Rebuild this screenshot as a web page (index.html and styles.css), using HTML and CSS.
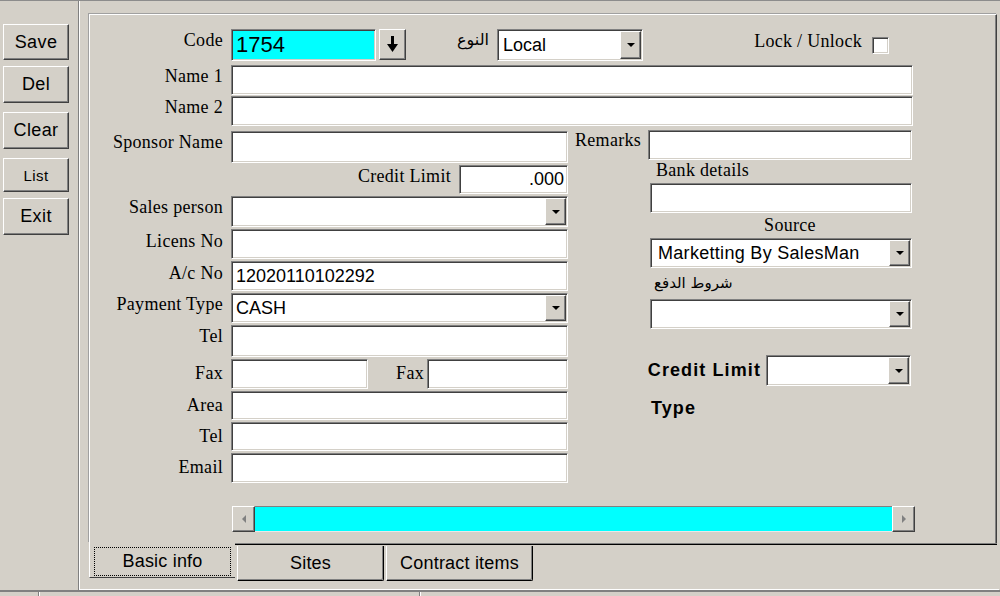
FILE: index.html
```html
<!DOCTYPE html>
<html>
<head>
<meta charset="utf-8">
<title>Customer</title>
<link rel="stylesheet" href="styles.css">
</head>
<body>
<div class="app">
  <div class="body">
    <aside class="sidebar">
      <div class="raised side-btn save">Save</div>
      <div class="raised side-btn del">Del</div>
      <div class="raised side-btn clear">Clear</div>
      <div class="raised side-btn list">List</div>
      <div class="raised side-btn exit">Exit</div>
    </aside>
    <main class="main">
      <div class="panel">
        <div class="form">
          <div class="top-row">
            <span class="lbl lbl-col">Code</span>
            <div class="field code">1754</div>
            <div class="raised arrow-btn">
              <svg width="11" height="17" viewBox="0 0 11 17"><rect x="4" y="0" width="3" height="10" fill="#000"/><polygon points="0,8 11,8 5.5,16" fill="#000"/></svg>
            </div>
            <span class="ar-lbl type-lbl">النوع</span>
            <div class="field combo local"><span class="val">Local</span><span class="raised dd"></span></div>
            <span class="lbl lock">Lock / Unlock</span>
            <span class="check"></span>
          </div>
          <div class="name-row">
            <span class="lbl lbl-col">Name 1</span>
            <div class="field name-field"></div>
          </div>
          <div class="name-row second">
            <span class="lbl lbl-col">Name 2</span>
            <div class="field name-field"></div>
          </div>
          <div class="cols">
            <div class="left">
              <span class="lbl cell-lbl">Sponsor Name</span>
              <div class="field"></div>

              <span></span>
              <div class="credit-cell"><span class="lbl credit-lbl">Credit Limit</span><div class="field credit-field">.000</div></div>

              <span class="lbl cell-lbl">Sales person</span>
              <div class="field combo"><span class="val"></span><span class="raised dd"></span></div>

              <span class="lbl cell-lbl low1">Licens No</span>
              <div class="field"></div>

              <span class="lbl cell-lbl low1">A/c No</span>
              <div class="field">12020110102292</div>

              <span class="lbl cell-lbl">Payment Type</span>
              <div class="field combo"><span class="val">CASH</span><span class="raised dd"></span></div>

              <span class="lbl cell-lbl">Tel</span>
              <div class="field"></div>

              <span class="lbl cell-lbl low2">Fax</span>
              <div class="fax-cell"><div class="field fax1"></div><span class="lbl fax-lbl">Fax</span><div class="field fax2"></div></div>

              <span class="lbl cell-lbl low2">Area</span>
              <div class="field"></div>

              <span class="lbl cell-lbl low2">Tel</span>
              <div class="field"></div>

              <span class="lbl cell-lbl low2">Email</span>
              <div class="field"></div>
            </div>
            <div class="right">
              <div class="rem-row"><span class="lbl rem-lbl">Remarks</span><div class="field rem-field"></div></div>
              <div class="lbl bank-lbl">Bank details</div>
              <div class="field sub-field"></div>
              <div class="lbl src-lbl">Source</div>
              <div class="field combo sub-field"><span class="val src-val">Marketting By SalesMan</span><span class="raised dd"></span></div>
              <div class="ar-lbl pay-lbl">شروط الدفع</div>
              <div class="field combo sub-field"><span class="val"></span><span class="raised dd"></span></div>
              <div class="cl-row"><span class="bold-lbl">Credit Limit</span><div class="field combo cl-sel"><span class="val"></span><span class="raised dd"></span></div></div>
              <div class="bold-lbl type-bold">Type</div>
            </div>
          </div>
        </div>
        <div class="hscroll">
          <div class="raised sb-btn"><span class="tri-left"></span></div>
          <div class="sb-track"></div>
          <div class="raised sb-btn"><span class="tri-right"></span></div>
        </div>
      </div>
      <div class="tabs">
        <div class="tab-active"><div class="focus">Basic info</div></div>
        <div class="tab-rest">
          <div class="tab">Sites</div>
          <div class="tab contract">Contract items</div>
        </div>
      </div>
    </main>
  </div>
  <div class="status">
    <span class="st-cell st-a"></span>
    <span class="st-cell st-b"></span>
  </div>
</div>
</body>
</html>
```

FILE: styles.css
```css
html, body {
  margin: 0;
  padding: 0;
  background: #d4d0c8;
}

.app {
  width: 1000px;
  height: 596px;
  box-sizing: border-box;
  border-top: 1px solid #8c8c8c;
  display: flex;
  flex-direction: column;
  overflow: hidden;
  background: #d4d0c8;
  font-family: "Liberation Sans", Arial, sans-serif;
  color: #000;
}

.body {
  height: 589px;
  display: flex;
}

/* generic 3D styles */
.raised {
  box-sizing: border-box;
  background: #d4d0c8;
  border: 1px solid;
  border-color: #ffffff #404040 #404040 #ffffff;
  box-shadow: inset -1px -1px #808080;
}

.field {
  box-sizing: border-box;
  background: #fff;
  border: 1px solid;
  border-color: #808080 #ffffff #ffffff #808080;
  box-shadow: inset 1px 1px #404040, inset -1px -1px #d4d0c8;
  display: flex;
  align-items: center;
  padding-left: 4px;
  font-size: 18px;
  font-family: "Liberation Sans", Arial, sans-serif;
  white-space: nowrap;
  overflow: hidden;
}

.lbl {
  font-family: "Liberation Serif", "Times New Roman", serif;
  font-size: 18px;
  line-height: 20px;
  letter-spacing: 0.3px;
  white-space: nowrap;
}

.ar-lbl {
  font-family: "DejaVu Sans", sans-serif;
  font-size: 14px;
  line-height: 18px;
  white-space: nowrap;
}

.bold-lbl {
  font-family: "Liberation Sans", Arial, sans-serif;
  font-weight: bold;
  font-size: 18px;
  letter-spacing: 1.1px;
  white-space: nowrap;
}

/* sidebar */
.sidebar {
  width: 79px;
  box-sizing: border-box;
  border-right: 1px solid #808080;
  display: flex;
  flex-direction: column;
  align-items: flex-start;
  padding-left: 3px;
}

.side-btn {
  width: 66px;
  display: flex;
  align-items: center;
  justify-content: center;
  font-size: 18px;
  letter-spacing: 0.4px;
}

.save { height: 36px; margin-top: 23px; }
.del { height: 37px; margin-top: 6px; }
.clear { height: 37px; margin-top: 9px; }
.list { height: 34px; margin-top: 9px; font-size: 15px; }
.exit { height: 37px; margin-top: 6px; }

/* main area */
.main {
  width: 920px;
  box-sizing: border-box;
  border-left: 1px solid #ffffff;
  padding: 13px 2px 0 9px;
  border-bottom: 1px solid #ffffff;
  display: flex;
  flex-direction: column;
}

.panel {
  height: 529px;
  box-sizing: border-box;
  border-top: 1px solid #ffffff;
  border-left: 1px solid #ffffff;
  border-right: 1px solid #404040;
  box-shadow: inset -1px 0 #808080, -1px -1px 0 #a0a0a0;
  display: flex;
  flex-direction: column;
}

.form {
  width: 823px;
  padding-top: 14px;
}

.lbl-col {
  width: 133px;
  flex: none;
  margin-right: 8px;
  text-align: right;
  padding-top: 1px;
}

.top-row {
  display: flex;
  align-items: flex-start;
  height: 32px;
}

.code {
  width: 145px;
  height: 32px;
  background: #00ffff;
  font-size: 22px;
  padding-left: 4px;
}

.arrow-btn {
  width: 27px;
  height: 31px;
  margin-left: 3px;
  display: flex;
  align-items: center;
  justify-content: center;
}

.type-lbl {
  width: 91px;
  box-sizing: border-box;
  text-align: right;
  padding-right: 8px;
  padding-top: 2px;
  font-size: 16px;
}

.local {
  width: 146px;
  height: 32px;
  padding-left: 5px;
}

.combo .val {
  flex: 1;
}

.dd {
  align-self: stretch;
  width: 21px;
  margin: 1px 1px 1px auto;
  display: flex;
  align-items: center;
  justify-content: center;
}

.dd::after {
  content: "";
  border-left: 4px solid transparent;
  border-right: 4px solid transparent;
  border-top: 4px solid #000;
}

.lock {
  margin-left: auto;
  padding-top: 2px;
}

.check {
  width: 17px;
  height: 17px;
  box-sizing: border-box;
  background: #fff;
  border: 1px solid;
  border-color: #808080 #ffffff #ffffff #808080;
  box-shadow: inset 1px 1px #404040, inset -1px -1px #d4d0c8;
  margin: 8px 24px 0 10px;
}

.name-row {
  display: flex;
  height: 30px;
  margin-top: 4px;
}

.name-row.second {
  margin-top: 1px;
}

.name-field {
  width: 682px;
}

.cols {
  display: flex;
  gap: 7px;
  margin-top: 4px;
}

.left {
  width: 478px;
  padding-top: 1px;
  display: grid;
  grid-template-columns: 133px 337px;
  column-gap: 8px;
  row-gap: 2px;
  grid-template-rows: 32px 29px 31px 30px 30px 30px 32px 30px 29px 29px 30px;
}

.cell-lbl {
  text-align: right;
  padding-top: 1px;
}

.cell-lbl.low1 { padding-top: 2px; }
.cell-lbl.low2 { padding-top: 4px; }

.credit-cell {
  display: flex;
  justify-content: flex-end;
  align-items: flex-start;
}

.credit-lbl {
  padding-top: 1px;
  margin-right: 8px;
}

.credit-field {
  width: 109px;
  height: 29px;
  justify-content: flex-end;
  padding-right: 3px;
}

.fax-cell {
  display: flex;
}

.fax1 { width: 137px; }
.fax2 { width: 141px; }

.fax-lbl {
  flex: 1;
  text-align: right;
  padding: 4px 3px 0 0;
}

/* right column */
.right {
  width: 337px;
  display: flex;
  flex-direction: column;
}

.rem-row {
  display: flex;
  height: 30px;
}

.rem-lbl {
  flex: 1;
}

.rem-field {
  width: 264px;
}

.bank-lbl {
  height: 23px;
  padding-left: 81px;
}

.sub-field {
  margin-left: 75px;
  height: 30px;
}

.src-lbl {
  height: 25px;
  margin-left: 75px;
  padding-left: 18px;
  padding-top: 2px;
  box-sizing: border-box;
  text-align: center;
}

.src-val {
  padding-left: 3px;
  letter-spacing: 0.3px;
}

.pay-lbl {
  height: 31px;
  margin-left: 75px;
  padding-left: 4px;
  padding-top: 6px;
  box-sizing: border-box;
  font-size: 15px;
}

.cl-row {
  display: flex;
  align-items: center;
  justify-content: flex-end;
  height: 31px;
  margin-top: 26px;
  padding-right: 1px;
}

.cl-sel {
  width: 145px;
  height: 31px;
  margin-left: 5px;
}

.type-bold {
  margin-top: 12px;
  padding-left: 76px;
}

/* scrollbar */
.hscroll {
  display: flex;
  width: 683px;
  height: 26px;
  margin: auto 0 11px 142px;
}

.sb-btn {
  width: 23px;
  display: flex;
  align-items: center;
  justify-content: center;
}

.sb-track {
  flex: 1;
  background: #00ffff;
  border-top: 1px solid #808080;
  border-bottom: 1px solid #e8e8e8;
}

.tri-left {
  border-top: 4px solid transparent;
  border-bottom: 4px solid transparent;
  border-right: 4px solid #808080;
}

.tri-right {
  border-top: 4px solid transparent;
  border-bottom: 4px solid transparent;
  border-left: 4px solid #808080;
}

/* tabs */
.tabs {
  display: flex;
  height: 46px;
}

.tab-active {
  width: 146px;
  height: 35px;
  box-sizing: border-box;
  border-left: 1px solid #ffffff;
  border-bottom: 1px solid #404040;
  display: flex;
}

.focus {
  flex: 1;
  margin: 4px 4px 1px 4px;
  border: 1px dotted #000;
  display: flex;
  align-items: center;
  justify-content: center;
  font-size: 18px;
  letter-spacing: 0.2px;
}

.tab-rest {
  flex: 1;
  height: 1px;
  border-top: 1px solid #808080;
  box-shadow: inset 0 1px #000;
  padding: 2px 0 0 2px;
  display: flex;
  align-items: flex-start;
}

.tab {
  flex: none;
  width: 147px;
  height: 35px;
  box-sizing: border-box;
  background: #d4d0c8;
  border-left: 1px solid #ffffff;
  border-right: 1px solid #000;
  border-bottom: 1px solid #000;
  border-bottom-right-radius: 2px;
  box-shadow: inset -1px -1px #808080;
  display: flex;
  align-items: center;
  justify-content: center;
  font-size: 18px;
  letter-spacing: 0.2px;
}

.tab.contract {
  margin-left: 2px;
}

/* status strip */
.status {
  height: 6px;
  box-sizing: border-box;
  border-top: 2px solid #808080;
  display: flex;
}

.st-cell {
  border-right: 1px solid #808080;
  box-shadow: 1px 0 #fff;
}

.st-a { width: 38px; }
.st-b { width: 380px; }
```
